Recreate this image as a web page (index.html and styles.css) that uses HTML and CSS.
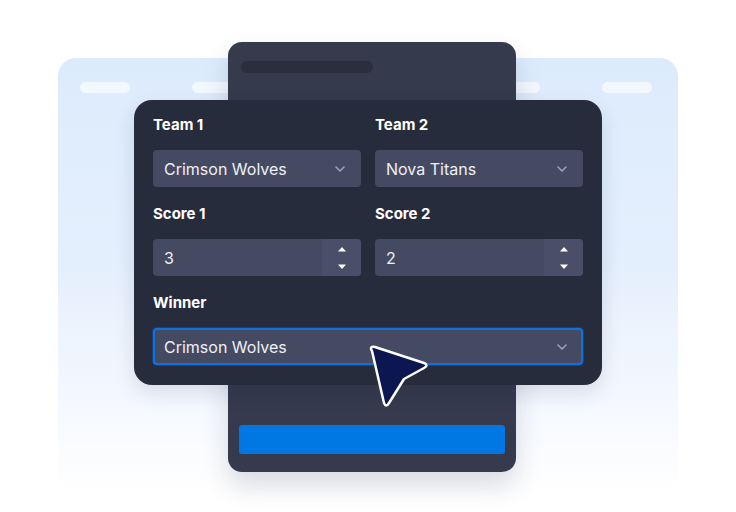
FILE: index.html
```html
<!DOCTYPE html>
<html lang="en">
<head>
    <meta charset="UTF-8">
    <meta name="viewport" content="width=device-width, initial-scale=1.0">
    <title>Match result</title>
    <link rel="stylesheet" href="styles.css">
</head>
<body>
    <div class="stage">
        <!-- faded page in the background -->
        <div class="backdrop">
            <div class="nav">
                <div class="nav-group"><span class="pill"></span><span class="pill"></span></div>
                <div class="nav-group"><span class="pill"></span><span class="pill"></span></div>
            </div>
        </div>

        <!-- form window behind the card -->
        <div class="sheet">
            <div class="sheet-title"></div>
            <div class="sheet-button"></div>
        </div>

        <!-- match form -->
        <div class="card">
            <div class="row">
                <div class="field">
                    <label>Team 1</label>
                    <div class="select">
                        <span>Crimson Wolves</span>
                        <svg class="chevron" width="10" height="6" viewBox="0 0 10 6"><path d="M1 1l4 4 4-4"/></svg>
                    </div>
                </div>
                <div class="field">
                    <label>Team 2</label>
                    <div class="select">
                        <span>Nova Titans</span>
                        <svg class="chevron" width="10" height="6" viewBox="0 0 10 6"><path d="M1 1l4 4 4-4"/></svg>
                    </div>
                </div>
            </div>
            <div class="row">
                <div class="field">
                    <label>Score 1</label>
                    <div class="number">
                        <span class="value">3</span>
                        <div class="spinner">
                            <svg width="8" height="5" viewBox="0 0 8 5"><path d="M4 0L8 4.5H0z"/></svg>
                            <svg width="8" height="5" viewBox="0 0 8 5"><path d="M0 0.5H8L4 5z"/></svg>
                        </div>
                    </div>
                </div>
                <div class="field">
                    <label>Score 2</label>
                    <div class="number">
                        <span class="value">2</span>
                        <div class="spinner">
                            <svg width="8" height="5" viewBox="0 0 8 5"><path d="M4 0L8 4.5H0z"/></svg>
                            <svg width="8" height="5" viewBox="0 0 8 5"><path d="M0 0.5H8L4 5z"/></svg>
                        </div>
                    </div>
                </div>
            </div>
            <div class="field">
                <label>Winner</label>
                <div class="select focused">
                    <span>Crimson Wolves</span>
                    <svg class="chevron" width="10" height="6" viewBox="0 0 10 6"><path d="M1 1l4 4 4-4"/></svg>
                </div>
            </div>
        </div>

        <svg class="pointer" width="70" height="70" viewBox="0 0 70 70">
            <path d="M12 14 Q9 9 15 10 L64 26 Q69 28 64 31 L44 42 L29 66 Q26 71 24 66 Z"/>
        </svg>
    </div>
</body>
</html>
```

FILE: styles.css
```css
body {
    margin: 0;
    background: #ffffff;
    font-family: "Inter", "Liberation Sans", sans-serif;
}
.stage {
    position: relative;
    width: 736px;
    height: 512px;
    overflow: hidden;
}

.backdrop {
    position: absolute;
    left: 58px;
    top: 58px;
    width: 620px;
    height: 454px;
    border-radius: 18px;
    background: linear-gradient(180deg, #dcebfc 0%, #e4effd 45%, #f4f8fe 75%, #ffffff 96%);
}
.nav {
    display: flex;
    justify-content: space-between;
    padding: 24px 26px 0 22px;
}
.nav-group {
    display: flex;
    gap: 62px;
}
.pill {
    width: 50px;
    height: 11px;
    border-radius: 6px;
    background: rgba(255, 255, 255, 0.65);
}

.sheet {
    position: absolute;
    left: 228px;
    top: 42px;
    width: 288px;
    height: 430px;
    box-sizing: border-box;
    padding: 19px 11px 18px 13px;
    display: flex;
    flex-direction: column;
    justify-content: space-between;
    background: #353a4d;
    border-radius: 14px;
    box-shadow: 0 14px 26px rgba(30, 45, 80, 0.16);
}
.sheet-title {
    width: 132px;
    height: 12px;
    border-radius: 6px;
    background: #2a2e3d;
}
.sheet-button {
    margin-left: -2px;
    height: 29px;
    border-radius: 3px;
    background: #0077e3;
}

.card {
    position: absolute;
    left: 134px;
    top: 100px;
    width: 468px;
    height: 285px;
    box-sizing: border-box;
    padding: 15px 19px 19px;
    display: flex;
    flex-direction: column;
    gap: 17px;
    background: #272c3d;
    border-radius: 18px;
    box-shadow: 0 8px 20px rgba(20, 30, 60, 0.12);
}
.row {
    display: grid;
    grid-template-columns: 1fr 1fr;
    gap: 14px;
}
.field label {
    display: block;
    height: 20px;
    line-height: 20px;
    margin-bottom: 15px;
    font-size: 15px;
    font-weight: 700;
    color: #ffffff;
}
.select, .number {
    height: 37px;
    box-sizing: border-box;
    display: flex;
    align-items: center;
    background: #454a63;
    border-radius: 4px;
    color: #eef0f6;
    font-size: 16px;
}
.select {
    justify-content: space-between;
    padding: 0 16px 0 11px;
}
.chevron {
    fill: none;
    stroke: #9ca1b7;
    stroke-width: 1.6;
    stroke-linecap: round;
    stroke-linejoin: round;
}
.select.focused {
    border: 2px solid #0b72e0;
    box-shadow: 0 0 0 1px rgba(10, 90, 200, 0.45);
    padding-left: 9px;
    padding-right: 14px;
}
.number .value {
    flex: 1;
    padding-left: 11px;
}
.spinner {
    width: 39px;
    align-self: stretch;
    display: flex;
    flex-direction: column;
    align-items: center;
    justify-content: center;
    gap: 12px;
    background: #4a4f69;
    border-radius: 0 4px 4px 0;
}
.spinner svg {
    fill: #ffffff;
}

.pointer {
    position: absolute;
    left: 360px;
    top: 337px;
}
.pointer path {
    fill: #0c1650;
    stroke: #ffffff;
    stroke-width: 2.5;
    stroke-linejoin: round;
}
```
